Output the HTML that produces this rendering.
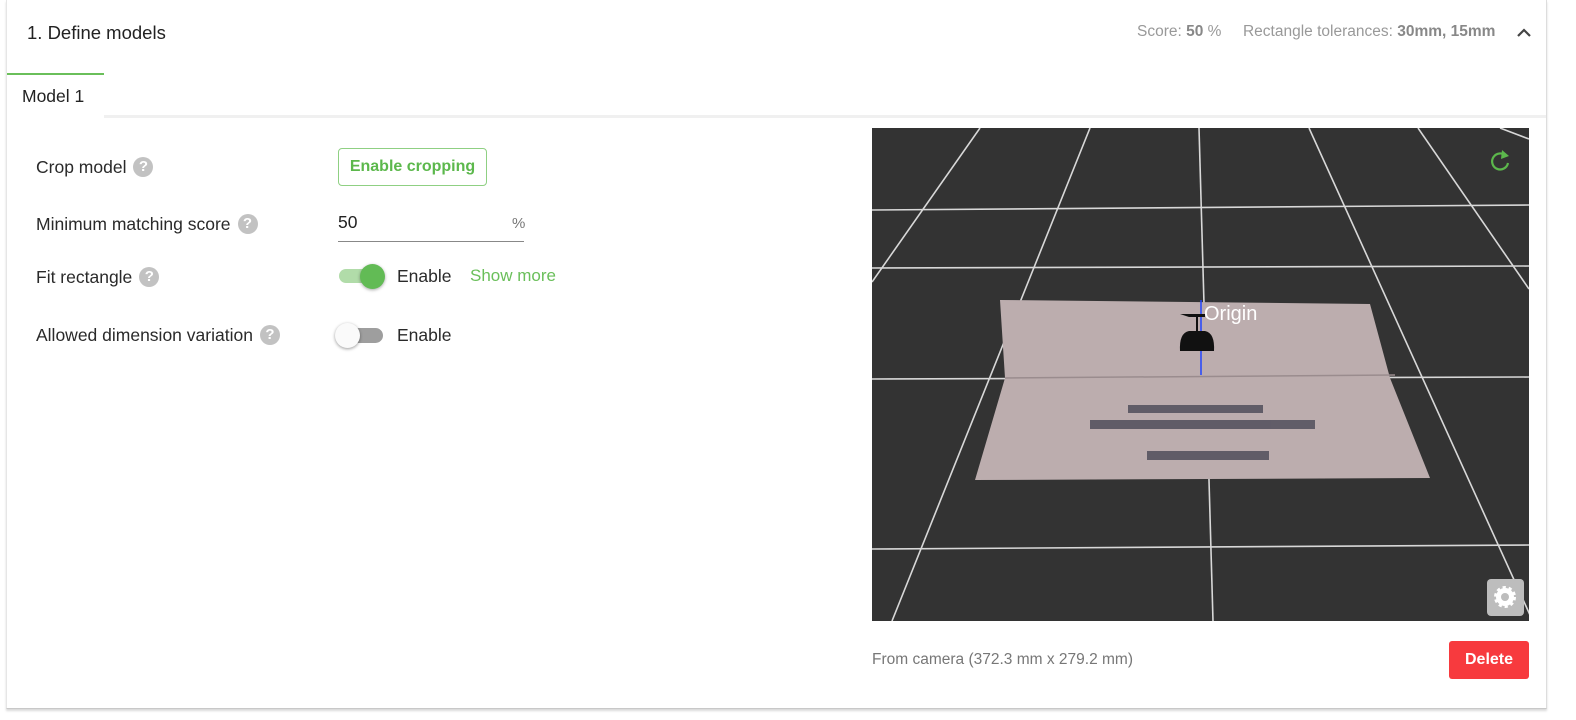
<!DOCTYPE html>
<html><head><meta charset="utf-8"><style>
*{box-sizing:border-box;margin:0;padding:0}
body{width:1576px;height:720px;background:#fff;font-family:"Liberation Sans",sans-serif;position:relative;overflow:hidden;color:#222}
.card{position:absolute;left:6px;top:0;width:1541px;height:709px;border-left:1px solid #e6e6e6;border-right:1px solid #ddd;border-bottom:1px solid #c8c8c8;box-shadow:0 2px 2px rgba(0,0,0,.15)}
.a{position:absolute;white-space:nowrap}
.q{display:inline-block;width:20px;height:20px;border-radius:50%;background:#c2c2c2;color:#fff;font-size:15px;font-weight:bold;text-align:center;line-height:20px;vertical-align:2px;margin-left:7px}
.lbl{font-size:17.5px;color:#2a2a2a}
</style></head><body>
<div class="card"></div>
<div class="a" style="left:27px;top:22px;font-size:18.5px;color:#222">1. Define models</div>
<div class="a" style="left:1137px;top:23px;font-size:15.5px;color:#999">Score: <b style="color:#888">50</b> %&nbsp;&nbsp;&nbsp;&nbsp;&nbsp;Rectangle tolerances: <b style="color:#888">30mm, 15mm</b></div>
<svg class="a" style="left:1516px;top:27px" width="16" height="12"><path d="M2 9 L8 3 L14 9" stroke="#444" stroke-width="2.2" fill="none"/></svg>
<div class="a" style="left:7px;top:73px;width:97px;height:2px;background:#6abf5a"></div>
<div class="a" style="left:22px;top:86px;font-size:17.5px;color:#222">Model 1</div>
<div class="a" style="left:104px;top:115px;width:1442px;height:3px;background:#f0f0f0"></div>

<div class="a lbl" style="left:36px;top:157px">Crop model<span class="q">?</span></div>
<div class="a" style="left:338px;top:148px;width:149px;height:38px;border:1px solid #8fd083;border-radius:4px;color:#5cb84c;font-size:16px;font-weight:bold;text-align:center;line-height:36px">Enable cropping</div>

<div class="a lbl" style="left:36px;top:214px">Minimum matching score<span class="q">?</span></div>
<div class="a" style="left:338px;top:212px;font-size:17.5px;color:#222">50</div>
<div class="a" style="left:512px;top:215px;font-size:15px;color:#777">%</div>
<div class="a" style="left:338px;top:241px;width:186px;height:1px;background:#888"></div>

<div class="a lbl" style="left:36px;top:267px">Fit rectangle<span class="q">?</span></div>
<div class="a" style="left:339px;top:269px;width:36px;height:14px;border-radius:7px;background:#b1dca9"></div>
<div class="a" style="left:360px;top:264px;width:25px;height:25px;border-radius:50%;background:#62bb55;box-shadow:0 1px 3px rgba(0,0,0,.35)"></div>
<div class="a lbl" style="left:397px;top:266px">Enable</div>
<div class="a" style="left:470px;top:266px;font-size:17px;color:#6abf5a">Show more</div>

<div class="a lbl" style="left:36px;top:325px">Allowed dimension variation<span class="q">?</span></div>
<div class="a" style="left:339px;top:328px;width:44px;height:15px;border-radius:8px;background:#9e9e9e"></div>
<div class="a" style="left:335px;top:323px;width:25px;height:25px;border-radius:50%;background:#fafafa;box-shadow:0 1px 3px rgba(0,0,0,.4)"></div>
<div class="a lbl" style="left:397px;top:325px">Enable</div>

<svg class="a" style="left:872px;top:128px" width="657" height="493" viewBox="872 128 657 493">
<rect x="872" y="128" width="657" height="493" fill="#333"/>
<g stroke="#d8d8d8" stroke-width="1.6" fill="none">
<line x1="872" y1="210" x2="1529" y2="205"/>
<line x1="872" y1="268" x2="1529" y2="266"/>
<line x1="872" y1="379" x2="1529" y2="377"/>
<line x1="872" y1="549" x2="1529" y2="545"/>
<line x1="980" y1="128" x2="872" y2="282"/>
<line x1="1090" y1="128" x2="892" y2="621"/>
<line x1="1199" y1="128" x2="1213" y2="621"/>
<line x1="1309" y1="128" x2="1530" y2="615"/>
<line x1="1418" y1="128" x2="1529" y2="289"/>
<line x1="1500" y1="128" x2="1529" y2="139"/>
</g>
<polygon points="1000,300 1370,304 1390,378 1430,478 975,480 1005,378" fill="#bcadae"/>
<line x1="1005" y1="378" x2="1395" y2="375" stroke="#9a8c8e" stroke-width="1.5"/>
<line x1="1201" y1="300" x2="1201" y2="375" stroke="#2244ff" stroke-width="1.5"/>
<path d="M1180 314 h25 v3 h-9 v14 h9 q10 2 9 20 h-34 q-1 -18 9 -20 h9 v-14 h-9z" fill="#111"/>
<text x="1204" y="320" font-size="20" fill="#fff" font-family="Liberation Sans">Origin</text>
<g fill="#3a3a4a" opacity=".7">
<rect x="1128" y="405" width="135" height="8"/><rect x="1090" y="420" width="225" height="9"/><rect x="1147" y="451" width="122" height="9"/>
</g>
<path d="M1506 156 a8 8 0 1 0 2 7" stroke="#5cb84c" stroke-width="2.2" fill="none"/><path d="M1502 150 l7 6 -8 3z" fill="#5cb84c"/>
<rect x="1487" y="579" width="37" height="37" rx="4" fill="#bdbdbd"/>
<circle cx="1505" cy="597" r="9" fill="#fff"/><circle cx="1505" cy="597" r="9" fill="none" stroke="#fff" stroke-width="4" stroke-dasharray="3 2.7"/><circle cx="1505" cy="597" r="4" fill="#bdbdbd"/>
</svg>

<div class="a" style="left:872px;top:651px;font-size:15.5px;color:#777">From camera (372.3 mm x 279.2 mm)</div>
<div class="a" style="left:1449px;top:641px;width:80px;height:38px;background:#f73a3e;border-radius:3px;color:#fff;font-size:16px;font-weight:bold;text-align:center;line-height:38px">Delete</div>
</body></html>
